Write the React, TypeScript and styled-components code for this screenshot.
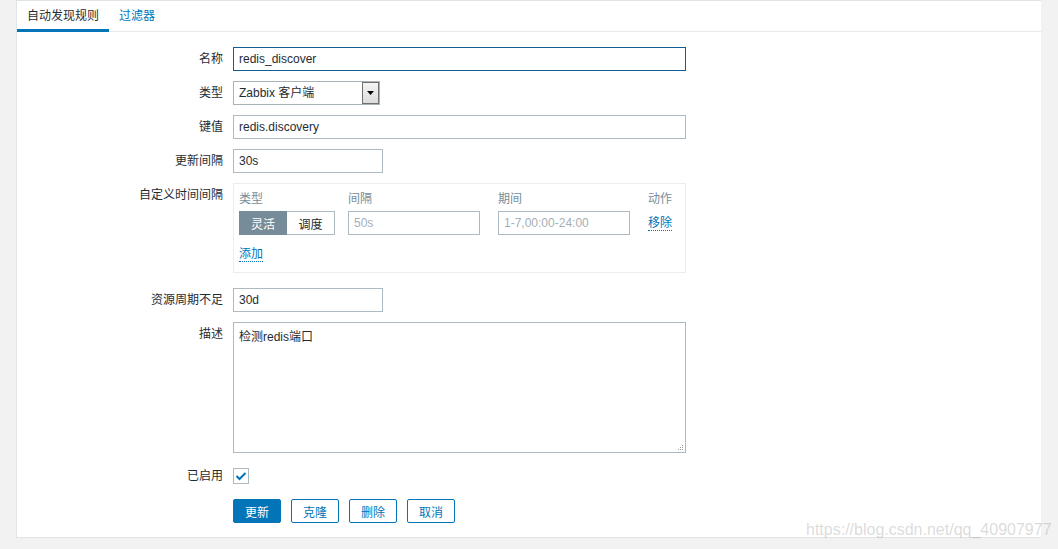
import React from "react";
import styled, { createGlobalStyle, css } from "styled-components";

const FONT = `"Liberation Sans", "Noto Sans CJK SC", Arial, sans-serif`;
const BLUE = "#0275b8";
const TEXT = "#1f2c33";
const BORDER = "#acbbc2";
const MUTED = "#768d99";

const Global = createGlobalStyle`
  html, body { margin: 0; padding: 0; }
  body {
    background: #f2f2f2;
    font-family: ${FONT};
    font-size: 12px;
    color: ${TEXT};
  }
  * { box-sizing: border-box; }
`;

const Page = styled.div`
  position: relative;
  width: 1058px;
  height: 549px;
  overflow: hidden;
`;

const Panel = styled.div`
  margin-left: 16px;
  width: 1025px;
  height: 538px;
  background: #ffffff;
  border-top: 1px solid #dfe4e7;
  border-left: 1px solid #dfe4e7;
  border-bottom: 1px solid #dfe4e7;
`;

const TabNav = styled.div`
  display: flex;
  height: 31px;
  box-shadow: inset 0 -1px 0 #e6eaec;
`;

const Tab = styled.div<{ $active?: boolean }>`
  height: 31px;
  padding: 1px 10px 0 10px;
  display: flex;
  align-items: center;
  font-size: 12px;
  line-height: 14px;
  border-bottom: 3px solid ${(p) => (p.$active ? BLUE : "transparent")};
  color: ${(p) => (p.$active ? TEXT : BLUE)};
`;

const Form = styled.div`
  padding-top: 15px;
`;

const Row = styled.div<{ $mt?: number }>`
  display: grid;
  grid-template-columns: 206px 1fr;
  column-gap: 10px;
  margin-top: ${(p) => p.$mt ?? 10}px;
`;

const Label = styled.div<{ $pt?: number }>`
  text-align: right;
  line-height: 14px;
  padding-top: ${(p) => p.$pt ?? 5}px;
  white-space: nowrap;
  color: ${TEXT};
`;

const Field = styled.div`
  display: flex;
  align-items: flex-start;
`;

const TextInput = styled.input<{ $w: number; $focus?: boolean }>`
  width: ${(p) => p.$w}px;
  height: 24px;
  padding: 0 5px;
  margin: 0;
  border: 1px solid ${(p) => (p.$focus ? "#115c93" : BORDER)};
  background: #fff;
  font-family: ${FONT};
  font-size: 12px;
  color: ${TEXT};
  outline: none;
  &::placeholder {
    color: #a3b0b6;
    opacity: 1;
  }
`;

const SelectBox = styled.div`
  width: 147px;
  height: 24px;
  border: 1px solid #a9b3b8;
  display: flex;
  align-items: center;
  padding-left: 5px;
  background: #fff;
  font-size: 12px;
  color: ${TEXT};
`;

const SelectText = styled.span`
  flex: 1;
  line-height: 14px;
`;

const ArrowBox = styled.div`
  width: 17px;
  height: 22px;
  border: 1px solid #707070;
  background: linear-gradient(#f4f4f4, #dcdcdc);
  display: flex;
  align-items: center;
  justify-content: center;
`;

const CustomBox = styled.div`
  width: 453px;
  border: 1px solid #ebeef0;
  padding: 0 5px 10px 5px;
  display: grid;
  grid-template-columns: 109px 150px 150px 1fr;
`;

const HeadCell = styled.div`
  padding-top: 8px;
  line-height: 14px;
  color: ${MUTED};
`;

const DataCell = styled.div`
  margin-top: 5px;
  height: 24px;
  display: flex;
  align-items: center;
`;

const Segmented = styled.div`
  display: flex;
`;

const SegButton = styled.div<{ $active?: boolean }>`
  width: 48px;
  height: 24px;
  display: flex;
  align-items: center;
  justify-content: center;
  font-size: 12px;
  border: 1px solid ${(p) => (p.$active ? MUTED : BORDER)};
  background: ${(p) => (p.$active ? MUTED : "#fff")};
  color: ${(p) => (p.$active ? "#fff" : TEXT)};
  ${(p) =>
    !p.$active &&
    css`
      border-left: none;
    `}
`;

const DotLink = styled.span`
  color: ${BLUE};
  line-height: 14px;
  border-bottom: 1px dotted ${BLUE};
`;

const AddRow = styled.div`
  grid-column: 1 / -1;
  margin-top: 12px;
  line-height: 14px;
  display: flex;
`;

const AreaWrap = styled.div`
  position: relative;
  width: 453px;
  height: 131px;
`;

const TextArea = styled.textarea`
  display: block;
  width: 453px;
  height: 131px;
  margin: 0;
  padding: 7px 5px;
  border: 1px solid ${BORDER};
  font-family: ${FONT};
  font-size: 12px;
  line-height: 14px;
  color: ${TEXT};
  resize: none;
  outline: none;
`;

const Grip = styled.svg`
  position: absolute;
  right: 2px;
  bottom: 2px;
`;

const CheckBox = styled.div`
  width: 16px;
  height: 16px;
  border: 1px solid ${BORDER};
  background: #fff;
  display: flex;
  align-items: center;
  justify-content: center;
`;

const Buttons = styled.div`
  display: flex;
  gap: 10px;
`;

const Button = styled.div<{ $primary?: boolean }>`
  width: 48px;
  height: 24px;
  border-radius: 2px;
  border: 1px solid ${BLUE};
  background: ${(p) => (p.$primary ? BLUE : "#fff")};
  color: ${(p) => (p.$primary ? "#fff" : BLUE)};
  display: flex;
  align-items: center;
  justify-content: center;
  font-size: 12px;
`;

const Watermark = styled.div`
  position: absolute;
  left: 806px;
  top: 521px;
  font-family: "Liberation Sans", Arial, sans-serif;
  font-size: 16px;
  line-height: 18px;
  color: rgba(150, 150, 150, 0.35);
  white-space: nowrap;
`;

export default function App() {
  return (
    <Page>
      <Global />
      <Panel>
        <TabNav>
          <Tab $active>自动发现规则</Tab>
          <Tab>过滤器</Tab>
        </TabNav>
        <Form>
          <Row $mt={0}>
            <Label>名称</Label>
            <Field>
              <TextInput $w={453} $focus readOnly value="redis_discover" />
            </Field>
          </Row>
          <Row>
            <Label>类型</Label>
            <Field>
              <SelectBox>
                <SelectText>Zabbix 客户端</SelectText>
                <ArrowBox>
                  <svg width="7" height="4" viewBox="0 0 7 4">
                    <polygon points="0,0 7,0 3.5,4" fill="#000" />
                  </svg>
                </ArrowBox>
              </SelectBox>
            </Field>
          </Row>
          <Row>
            <Label>键值</Label>
            <Field>
              <TextInput $w={453} readOnly value="redis.discovery" />
            </Field>
          </Row>
          <Row>
            <Label>更新间隔</Label>
            <Field>
              <TextInput $w={150} readOnly value="30s" />
            </Field>
          </Row>
          <Row>
            <Label>自定义时间间隔</Label>
            <Field>
              <CustomBox>
                <HeadCell>类型</HeadCell>
                <HeadCell>间隔</HeadCell>
                <HeadCell>期间</HeadCell>
                <HeadCell>动作</HeadCell>
                <DataCell>
                  <Segmented>
                    <SegButton $active>灵活</SegButton>
                    <SegButton>调度</SegButton>
                  </Segmented>
                </DataCell>
                <DataCell>
                  <TextInput $w={132} readOnly placeholder="50s" />
                </DataCell>
                <DataCell>
                  <TextInput $w={132} readOnly placeholder="1-7,00:00-24:00" />
                </DataCell>
                <DataCell>
                  <DotLink>移除</DotLink>
                </DataCell>
                <AddRow>
                  <DotLink>添加</DotLink>
                </AddRow>
              </CustomBox>
            </Field>
          </Row>
          <Row $mt={15}>
            <Label>资源周期不足</Label>
            <Field>
              <TextInput $w={150} readOnly value="30d" />
            </Field>
          </Row>
          <Row>
            <Label>描述</Label>
            <Field>
              <AreaWrap>
                <TextArea readOnly value="检测redis端口" />
                <Grip width="7" height="7" viewBox="0 0 7 7">
                  <rect x="5" y="1" width="1" height="1" fill="#9a9a9a" />
                  <rect x="3" y="3" width="1" height="1" fill="#9a9a9a" />
                  <rect x="5" y="3" width="1" height="1" fill="#9a9a9a" />
                  <rect x="1" y="5" width="1" height="1" fill="#9a9a9a" />
                  <rect x="3" y="5" width="1" height="1" fill="#9a9a9a" />
                  <rect x="5" y="5" width="1" height="1" fill="#9a9a9a" />
                </Grip>
              </AreaWrap>
            </Field>
          </Row>
          <Row $mt={15}>
            <Label $pt={1}>已启用</Label>
            <Field>
              <CheckBox>
                <svg width="12" height="10" viewBox="0 0 12 10">
                  <polyline
                    points="1.5,5 4.5,8 10.5,2"
                    fill="none"
                    stroke={BLUE}
                    strokeWidth="2"
                  />
                </svg>
              </CheckBox>
            </Field>
          </Row>
          <Row $mt={15}>
            <div />
            <Buttons>
              <Button $primary>更新</Button>
              <Button>克隆</Button>
              <Button>删除</Button>
              <Button>取消</Button>
            </Buttons>
          </Row>
        </Form>
      </Panel>
      <Watermark>https://blog.csdn.net/qq_40907977</Watermark>
    </Page>
  );
}
